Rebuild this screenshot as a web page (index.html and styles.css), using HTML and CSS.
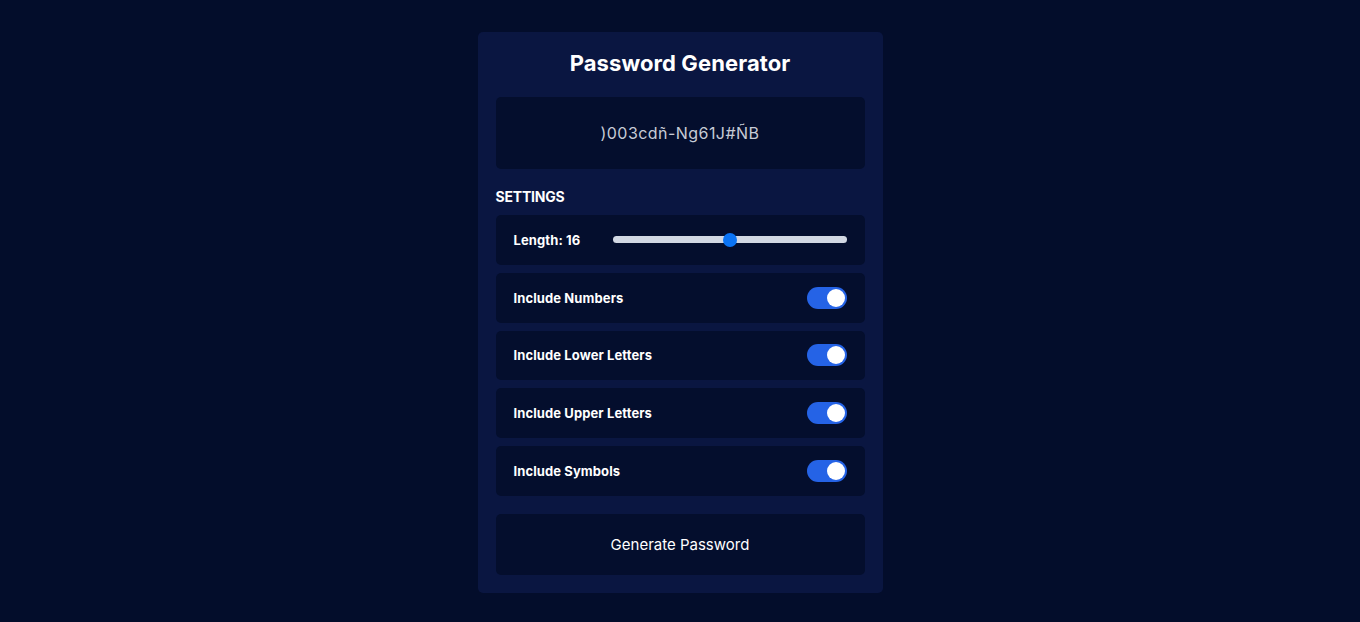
FILE: index.html
```html
<!DOCTYPE html>
<html lang="en">
<head>
<meta charset="utf-8">
<title>Password Generator</title>
<link rel="stylesheet" href="styles.css">
</head>
<body>
<main class="page">
  <section class="card">
    <h1 class="title">Password Generator</h1>
    <div class="result">)003cdñ-Ng61J#ÑB</div>
    <h2 class="settings-title">SETTINGS</h2>
    <div class="settings">
      <div class="row">
        <span class="label">Length: 16</span>
        <input class="range" type="range" min="4" max="28" value="16">
      </div>
      <div class="row">
        <span class="label">Include Numbers</span>
        <span class="toggle"><span class="knob"></span></span>
      </div>
      <div class="row">
        <span class="label">Include Lower Letters</span>
        <span class="toggle"><span class="knob"></span></span>
      </div>
      <div class="row">
        <span class="label">Include Upper Letters</span>
        <span class="toggle"><span class="knob"></span></span>
      </div>
      <div class="row">
        <span class="label">Include Symbols</span>
        <span class="toggle"><span class="knob"></span></span>
      </div>
    </div>
    <button class="generate" type="button">Generate Password</button>
  </section>
</main>
</body>
</html>
```
FILE: styles.css
```css
* { box-sizing: border-box; }
html, body {
  margin: 0;
  padding: 0;
  background: #030d2b;
  font-family: "Inter", "Open Sans", sans-serif;
  color: #fff;
}
.page {
  min-height: 622px;
  display: flex;
  justify-content: center;
  padding-top: 32px;
}
.card {
  width: 405px;
  height: 561px;
  background: #0a1641;
  border-radius: 5px;
  padding: 18px;
  display: flex;
  flex-direction: column;
}
.title {
  margin: 0;
  text-align: center;
  font-size: 22px;
  font-weight: 700;
  line-height: 26px;
  letter-spacing: 0.1px;
}
.result {
  margin-top: 21px;
  height: 72px;
  flex-shrink: 0;
  background: #040e2d;
  border-radius: 5px;
  display: flex;
  align-items: center;
  justify-content: center;
  font-size: 16px;
  color: #c7cbd6;
  letter-spacing: 0.45px;
}
.settings-title {
  margin: 19px 0 0;
  font-size: 14px;
  font-weight: 700;
  line-height: 18px;
  letter-spacing: -0.2px;
}
.settings {
  margin-top: 9px;
  display: flex;
  flex-direction: column;
  gap: 8px;
}
.row {
  height: 49.75px;
  flex-shrink: 0;
  background: #040e2d;
  border-radius: 5px;
  padding: 0 18px 0 18px;
  display: flex;
  align-items: center;
  justify-content: space-between;
}
.label {
  font-size: 13px;
  font-weight: 700;
  letter-spacing: 0.1px;
}
.range {
  -webkit-appearance: none;
  appearance: none;
  width: 234px;
  height: 7px;
  margin: 0;
  background: #d2d8e3;
  border-radius: 4px;
  outline: none;
}
.range::-webkit-slider-thumb {
  -webkit-appearance: none;
  appearance: none;
  width: 14px;
  height: 14px;
  border-radius: 50%;
  background: #0b74f5;
  border: none;
}
.toggle {
  width: 40px;
  height: 22px;
  border-radius: 11px;
  background: #2563e6;
  display: flex;
  align-items: center;
  justify-content: flex-end;
  padding: 0 2px;
}
.knob {
  width: 18px;
  height: 18px;
  border-radius: 50%;
  background: #fff;
}
.generate {
  margin-top: 18px;
  height: 61px;
  flex-shrink: 0;
  width: 100%;
  border: none;
  border-radius: 5px;
  background: #040e2d;
  color: #fff;
  font-family: inherit;
  font-size: 15px;
  font-weight: 400;
  cursor: pointer;
}
```
